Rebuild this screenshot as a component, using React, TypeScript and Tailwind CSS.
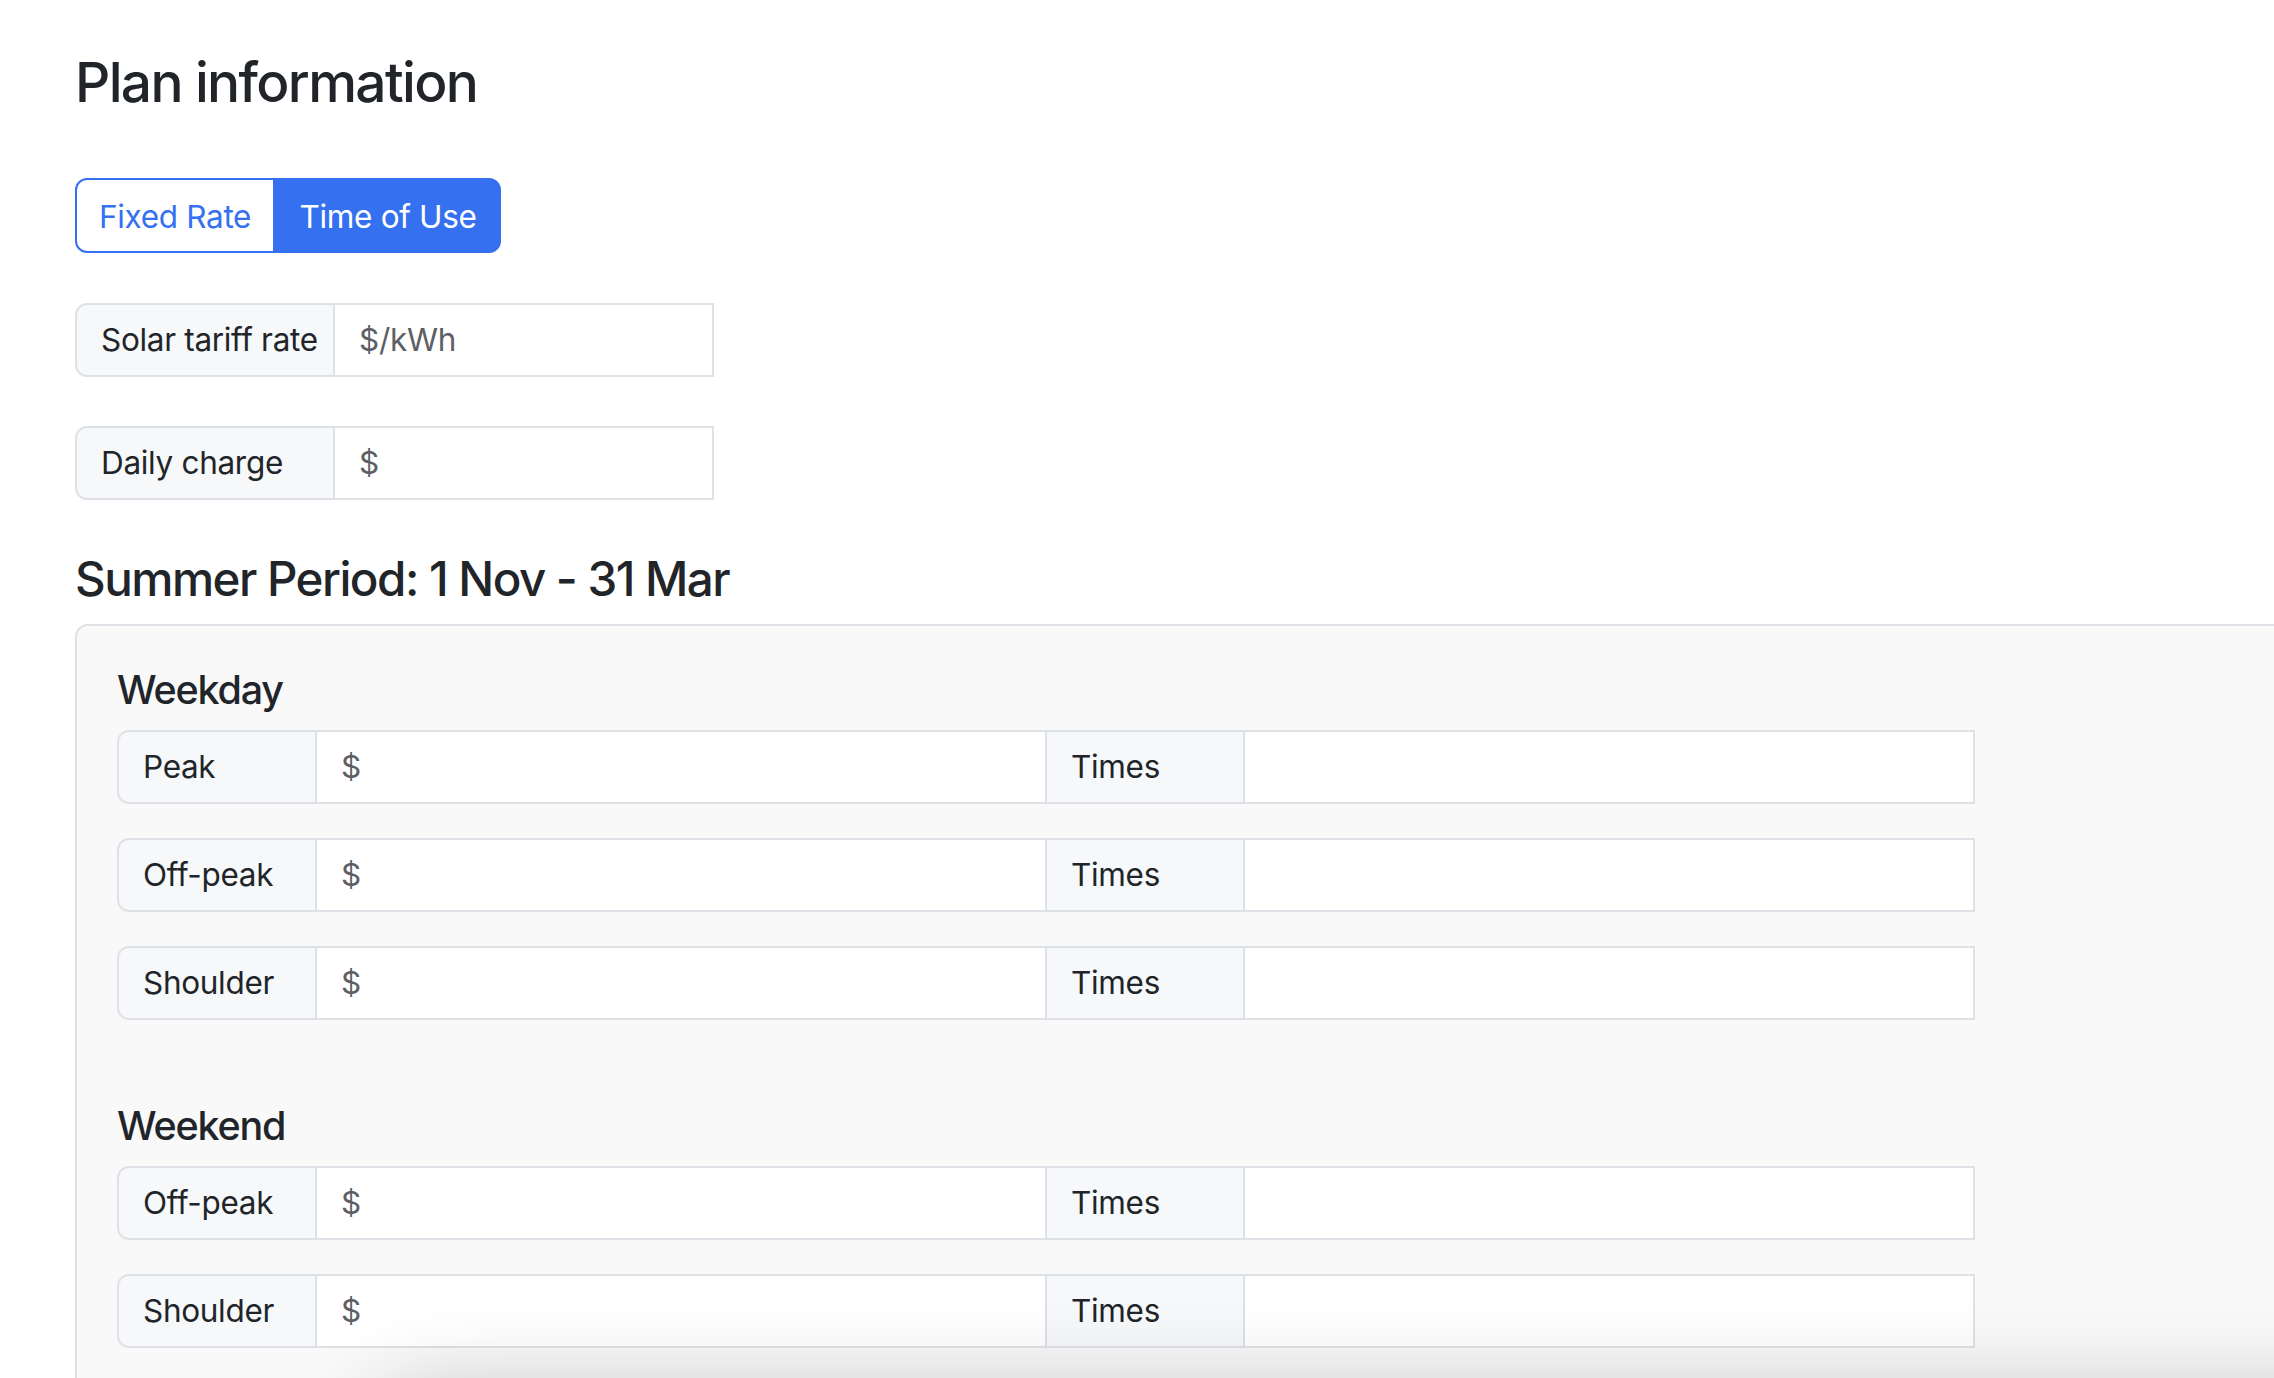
const FONT = "font-['Inter','Noto_Sans',sans-serif]";

type Row = { label: string };

const weekday: Row[] = [{ label: 'Peak' }, { label: 'Off-peak' }, { label: 'Shoulder' }];
const weekend: Row[] = [{ label: 'Off-peak' }, { label: 'Shoulder' }];

function TopGroup({ label, placeholder }: { label: string; placeholder: string }) {
  return (
    <div className="flex h-[74px]">
      <div className="flex w-[260px] items-center rounded-l-[12px] border-2 border-[#dee2e6] bg-[#f7f8fa] pl-[24px]">
        {label}
      </div>
      <div className="flex w-[379px] items-center border-y-2 border-r-2 border-[#dee2e6] bg-white pl-[24px] text-[#5c6064]">
        {placeholder}
      </div>
    </div>
  );
}

function RateRow({ label }: Row) {
  return (
    <div className="flex h-[74px]">
      <div className="flex w-[200px] items-center rounded-l-[12px] border-2 border-[#dee2e6] bg-[#f7f8fa] pl-[24px]">
        {label}
      </div>
      <div className="flex w-[730px] items-center border-y-2 border-r-2 border-[#dee2e6] bg-white pl-[24px] text-[#5c6064]">
        $
      </div>
      <div className="flex w-[198px] items-center border-y-2 border-r-2 border-[#dee2e6] bg-[#f7f8fa] pl-[24px]">
        Times
      </div>
      <div className="w-[730px] border-y-2 border-r-2 border-[#dee2e6] bg-white" />
    </div>
  );
}

function Section({ title, rows, className = '' }: { title: string; rows: Row[]; className?: string }) {
  return (
    <div className={className}>
      <h5 className="mb-[16px] text-[39.5px] font-medium leading-[48px] tracking-[-0.03em]">{title}</h5>
      <div className="flex flex-col gap-[34px]">
        {rows.map((r, i) => (
          <RateRow key={i} label={r.label} />
        ))}
      </div>
    </div>
  );
}

export default function App() {
  return (
    <div
      className={`relative h-screen overflow-hidden bg-white text-[31.5px] tracking-[-0.01em] text-[#212529] ${FONT}`}
    >
      <div className="pl-[75px] pt-[49px]">
        <h3 className="text-[55px] font-medium leading-[66px] tracking-[-0.03em]">Plan information</h3>

        <div className="mt-[63px] flex h-[75px]">
          <button className="flex w-[200px] items-center justify-center rounded-l-[12px] border-2 border-[#3570f1] bg-white pt-[2px] text-[#3570f1]">
            Fixed Rate
          </button>
          <button className="flex w-[226px] items-center justify-center rounded-r-[12px] border-2 border-[#3570f1] bg-[#3570f1] pt-[2px] text-white">
            Time of Use
          </button>
        </div>

        <div className="mt-[50px] flex flex-col gap-[49px]">
          <TopGroup label="Solar tariff rate" placeholder="$/kWh" />
          <TopGroup label="Daily charge" placeholder="$" />
        </div>

        <h4 className="mt-[50px] text-[47.5px] font-medium leading-[57px] tracking-[-0.032em]">
          Summer Period: 1 Nov - 31 Mar
        </h4>

        <div className="mt-[17px] rounded-l-[13px] border-2 border-r-0 border-[#dee2e6] bg-[#f9f9fa] p-[40px]">
          <Section title="Weekday" rows={weekday} />
          <Section title="Weekend" rows={weekend} className="mt-[82px]" />
        </div>
      </div>

      {/* soft shadow creeping in from below the window */}
      <div className="pointer-events-none fixed left-[360px] right-[-200px] top-[1392px] h-[300px] rounded-[80px] bg-[#e2e2e2] shadow-[0_0_90px_rgba(0,0,0,0.22)]" />
    </div>
  );
}
